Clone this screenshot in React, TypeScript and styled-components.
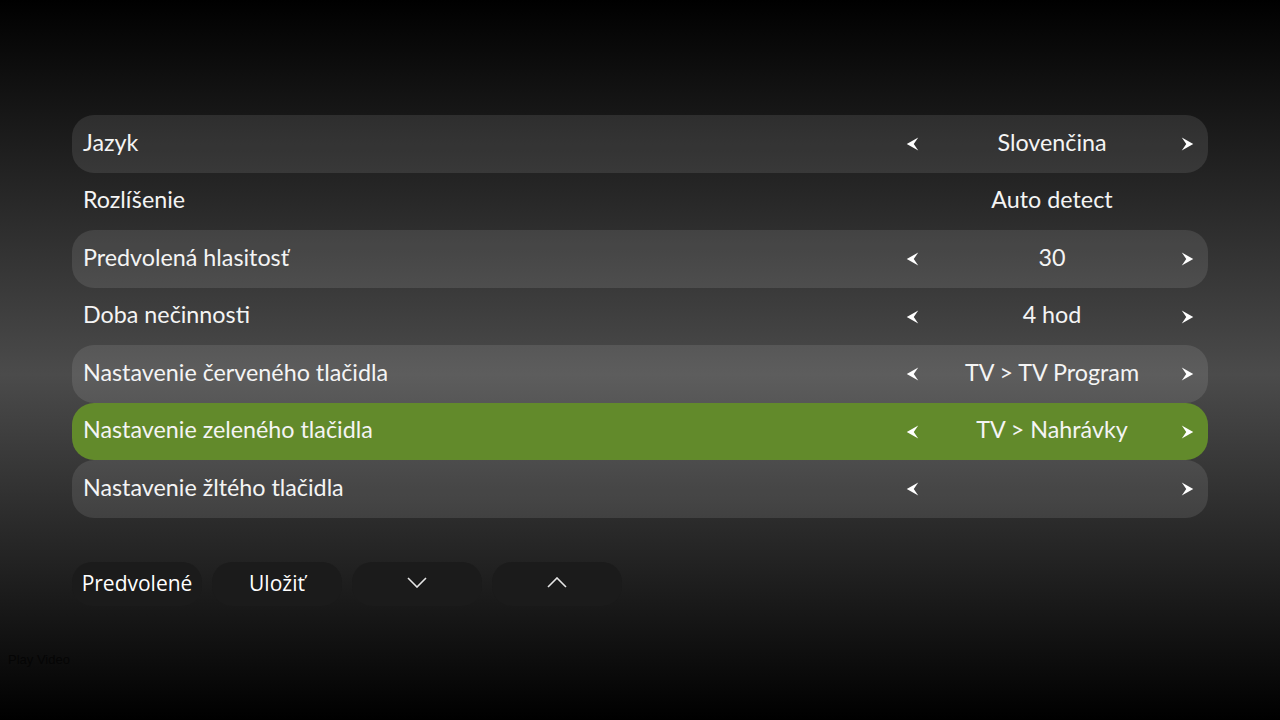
import styled, { createGlobalStyle } from 'styled-components'

const GlobalStyle = createGlobalStyle`
    html, body {
        margin: 0;
        padding: 0;
        height: 100%;
    }
    body {
        background: linear-gradient(to bottom, #000 0%, #4b4b4b 52%, #000 100%);
        font-family: Lato, "Noto Sans", sans-serif;
        color: #f4f4f4;
    }
`

const settings = [
    { label: 'Jazyk', value: 'Slovenčina', arrows: true },
    { label: 'Rozlíšenie', value: 'Auto detect', arrows: false },
    { label: 'Predvolená hlasitosť', value: '30', arrows: true },
    { label: 'Doba nečinnosti', value: '4 hod', arrows: true },
    { label: 'Nastavenie červeného tlačidla', value: 'TV > TV Program', arrows: true },
    { label: 'Nastavenie zeleného tlačidla', value: 'TV > Nahrávky', arrows: true, active: true },
    { label: 'Nastavenie žltého tlačidla', value: '', arrows: true },
]

function Dart({ dir }: { dir: 'left' | 'right' }) {
    const d = dir === 'left'
        ? 'M12 0.5 L0.5 7 L12 13.5 L7.5 7 Z'
        : 'M0.5 0.5 L12 7 L0.5 13.5 L5 7 Z'
    return (
        <svg width="13" height="14" viewBox="0 0 12.5 14">
            <path d={d} fill="#fff" />
        </svg>
    )
}

function Chevron({ up }: { up?: boolean }) {
    return (
        <svg width="20" height="11" viewBox="0 0 20 11">
            <path
                d={up ? 'M1 10 L10 1 L19 10' : 'M1 1 L10 10 L19 1'}
                fill="none"
                stroke="#e6e6e6"
                strokeWidth="1.6"
            />
        </svg>
    )
}

export default function App() {
    return (
        <Page>
            <GlobalStyle />
            <List>
                {settings.map((s, i) => (
                    <Row key={s.label} $striped={i % 2 === 0} $active={!!s.active}>
                        <Label>{s.label}</Label>
                        <ArrowCell>{s.arrows && <Dart dir="left" />}</ArrowCell>
                        <Value>{s.value}</Value>
                        <ArrowCell>{s.arrows && <Dart dir="right" />}</ArrowCell>
                    </Row>
                ))}
            </List>
            <Buttons>
                <Button>Predvolené</Button>
                <Button>Uložiť</Button>
                <Button><Chevron /></Button>
                <Button><Chevron up /></Button>
            </Buttons>
            <PlayVideo>Play Video</PlayVideo>
        </Page>
    )
}

const Page = styled.div`
    height: 720px;
    box-sizing: border-box;
    padding: 115px 72px 0 72px;
    display: flex;
    flex-direction: column;
`

const List = styled.div`
    display: flex;
    flex-direction: column;
`

const Row = styled.div<{ $striped: boolean; $active: boolean }>`
    display: grid;
    grid-template-columns: 1fr 52px 228px 42px;
    align-items: center;
    height: 57.5px;
    box-sizing: border-box;
    padding-left: 11px;
    border-radius: 22px;
    background: ${p => p.$active ? '#628a2b' : p.$striped ? 'rgba(255, 255, 255, 0.1)' : 'transparent'};
`

const Label = styled.div`
    font-size: 23.3px;
    margin-bottom: 4px;
`

const Value = styled.div`
    font-size: 23.3px;
    text-align: center;
    white-space: nowrap;
    margin-bottom: 4px;
`

const ArrowCell = styled.div`
    display: flex;
    align-items: center;
    justify-content: center;
    padding-top: 1px;
`

const Buttons = styled.div`
    display: flex;
    gap: 10px;
    margin-top: 44px;
`

const Button = styled.div`
    width: 130px;
    height: 44px;
    border-radius: 20px;
    background: #1b1b1b;
    display: flex;
    align-items: center;
    justify-content: center;
    font-family: "Open Sans", "Noto Sans", sans-serif;
    font-size: 21px;
    color: #fff;
    padding-bottom: 2px;
    box-sizing: border-box;
`

const PlayVideo = styled.div`
    margin: 46px 0 0 -64px;
    font-family: "Liberation Sans", Arial, sans-serif;
    font-size: 13px;
    color: #050505;
`
